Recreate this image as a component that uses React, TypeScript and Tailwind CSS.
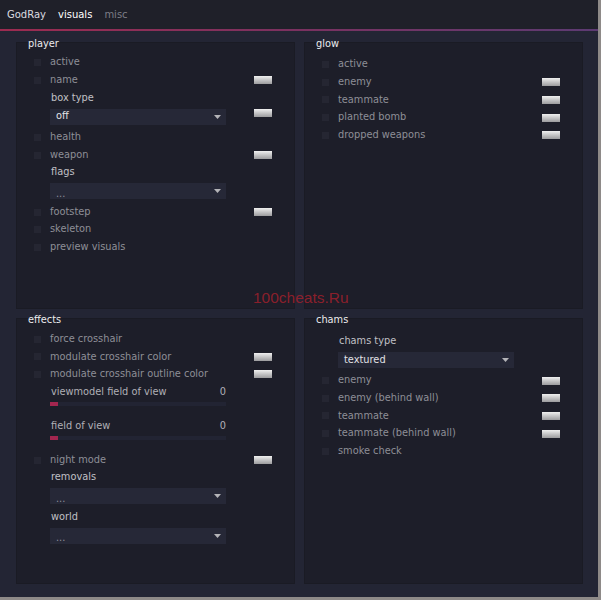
import React from 'react';

const font = { fontFamily: '"DejaVu Sans", Verdana, sans-serif' };

type Item =
    | { kind: 'check'; label: string; swatch?: boolean }
    | { kind: 'label'; label: string }
    | { kind: 'combo'; value: string; muted?: boolean; swatch?: boolean }
    | { kind: 'slider'; label: string; value: number };

const Swatch: React.FC = () => (
    <div className="ml-auto mr-[22px] w-[18px] h-[8px] bg-gradient-to-b from-[#f0f0f0] to-[#9c9c9e]" />
);

const Arrow: React.FC = () => (
    <svg width="7" height="4" viewBox="0 0 7 4" className="ml-auto">
        <polygon points="0,0 7,0 3.5,4" fill="#b4b4b8" />
    </svg>
);

const Row: React.FC<{ item: Item }> = ({ item }) => {
    if (item.kind === 'check') {
        return (
            <div className="flex items-center h-[17.6px]">
                <div className="ml-[17px] w-[7px] h-[7px] bg-[#252632]" />
                <span className="ml-[9px] text-[#8e8f97]">{item.label}</span>
                {item.swatch && <Swatch />}
            </div>
        );
    }
    if (item.kind === 'label') {
        return (
            <div className="flex items-center h-[17.5px] pl-[34px] text-[#c0c0c5]">{item.label}</div>
        );
    }
    if (item.kind === 'combo') {
        return (
            <div className="flex items-start mt-[2px] mb-[4px]">
                <div className="ml-[33px] w-[176px] h-[16px] bg-[#262837] flex items-center pl-[6px] pr-[5px]">
                    <span className={item.muted ? 'text-[#8e8f97] leading-none pt-[5px]' : 'text-[#e2e2e6]'}>{item.value}</span>
                    <Arrow />
                </div>
                {item.swatch && <Swatch />}
            </div>
        );
    }
    return (
        <div className="mb-[11px]">
            <div className="flex items-center justify-between h-[17.5px] ml-[34px] w-[175px] text-[#b0b0b6]">
                <span>{item.label}</span>
                <span>{item.value}</span>
            </div>
            <div className="ml-[33px] mt-[1.5px] w-[176px] h-[4px] bg-[#222433]">
                <div className="w-[8px] h-[4px] bg-[#a3264f]" />
            </div>
        </div>
    );
};

const Panel: React.FC<{ title: string; items: Item[]; pad: string }> = ({ title, items, pad }) => (
    <div className="bg-[#1d1e29] border border-[#1a1b24] flex flex-col min-h-0">
        <div className="-mt-[6px] h-[14px] leading-[14px] pl-[11px] text-[#ececef]">{title}</div>
        <div className={pad}>
            {items.map((it, i) => (
                <Row key={i} item={it} />
            ))}
        </div>
    </div>
);

const player: Item[] = [
    { kind: 'check', label: 'active' },
    { kind: 'check', label: 'name', swatch: true },
    { kind: 'label', label: 'box type' },
    { kind: 'combo', value: 'off', swatch: true },
    { kind: 'check', label: 'health' },
    { kind: 'check', label: 'weapon', swatch: true },
    { kind: 'label', label: 'flags' },
    { kind: 'combo', value: '...', muted: true },
    { kind: 'check', label: 'footstep', swatch: true },
    { kind: 'check', label: 'skeleton' },
    { kind: 'check', label: 'preview visuals' },
];

const glow: Item[] = [
    { kind: 'check', label: 'active' },
    { kind: 'check', label: 'enemy', swatch: true },
    { kind: 'check', label: 'teammate', swatch: true },
    { kind: 'check', label: 'planted bomb', swatch: true },
    { kind: 'check', label: 'dropped weapons', swatch: true },
];

const effects: Item[] = [
    { kind: 'check', label: 'force crosshair' },
    { kind: 'check', label: 'modulate crosshair color', swatch: true },
    { kind: 'check', label: 'modulate crosshair outline color', swatch: true },
    { kind: 'slider', label: 'viewmodel field of view', value: 0 },
    { kind: 'slider', label: 'field of view', value: 0 },
    { kind: 'check', label: 'night mode', swatch: true },
    { kind: 'label', label: 'removals' },
    { kind: 'combo', value: '...', muted: true },
    { kind: 'label', label: 'world' },
    { kind: 'combo', value: '...', muted: true },
];

const chams: Item[] = [
    { kind: 'label', label: 'chams type' },
    { kind: 'combo', value: 'textured' },
    { kind: 'check', label: 'enemy', swatch: true },
    { kind: 'check', label: 'enemy (behind wall)', swatch: true },
    { kind: 'check', label: 'teammate', swatch: true },
    { kind: 'check', label: 'teammate (behind wall)', swatch: true },
    { kind: 'check', label: 'smoke check' },
];

export default function App() {
    return (
        <div className="w-[601px] h-[600px] bg-[#8e8a88] text-[9.8px]" style={font}>
            <div className="relative w-[598px] h-[597px] flex flex-col bg-[#232534]">
                <div className="h-[29px] bg-[#1f2029] flex items-center pl-[7px] gap-[12px] text-[10px]">
                    <span className="text-[#dcdce0]">GodRay</span>
                    <span className="text-white">visuals</span>
                    <span className="text-[#7c7d86]">misc</span>
                </div>
                <div className="h-[2px] bg-gradient-to-r from-[#9c2b50] via-[#7a3160] to-[#5c3a72]" />
                <div className="flex-1 min-h-0 grid grid-cols-2 grid-rows-2 gap-[9px] pt-[11px] pl-[16px] pr-[15px] pb-[13px]">
                    <Panel title="player" items={player} pad="pt-[3px]" />
                    <Panel title="glow" items={glow} pad="pt-[5px]" />
                    <Panel title="effects" items={effects} pad="pt-[4px]" />
                    <Panel title="chams" items={chams} pad="pt-[6px]" />
                </div>
                <div
                    className="absolute left-[253px] top-[290px] text-[15.5px] text-[#a8202c]/80 leading-none"
                    style={{ fontFamily: '"Liberation Sans", Arial, sans-serif' }}
                >
                    100cheats.Ru
                </div>
            </div>
        </div>
    );
}
